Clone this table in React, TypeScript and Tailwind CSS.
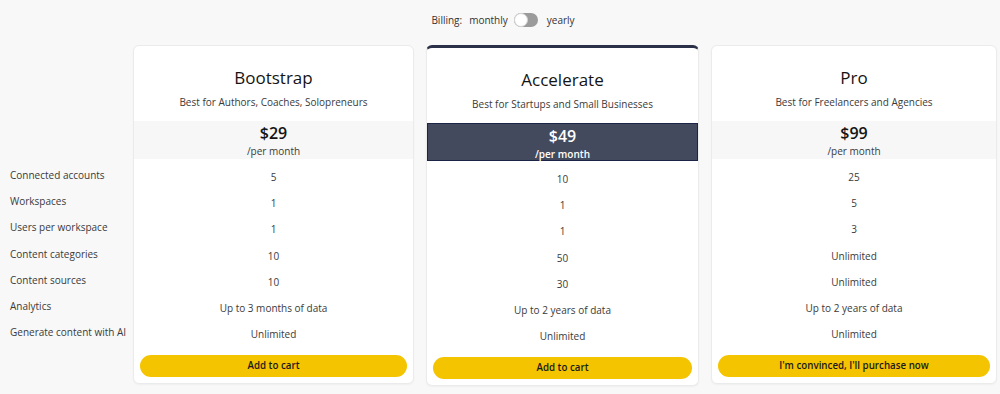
import React from "react";

type Plan = {
  name: string;
  tagline: string;
  price: string;
  values: string[];
  cta: string;
  featured?: boolean;
  width: string;
};

const features = [
  "Connected accounts",
  "Workspaces",
  "Users per workspace",
  "Content categories",
  "Content sources",
  "Analytics",
  "Generate content with AI",
];

const plans: Plan[] = [
  {
    name: "Bootstrap",
    tagline: "Best for Authors, Coaches, Solopreneurs",
    price: "$29",
    values: ["5", "1", "1", "10", "10", "Up to 3 months of data", "Unlimited"],
    cta: "Add to cart",
    width: "w-[281px]",
  },
  {
    name: "Accelerate",
    tagline: "Best for Startups and Small Businesses",
    price: "$49",
    values: ["10", "1", "1", "50", "30", "Up to 2 years of data", "Unlimited"],
    cta: "Add to cart",
    featured: true,
    width: "w-[273px]",
  },
  {
    name: "Pro",
    tagline: "Best for Freelancers and Agencies",
    price: "$99",
    values: ["25", "5", "3", "Unlimited", "Unlimited", "Up to 2 years of data", "Unlimited"],
    cta: "I'm convinced, I'll purchase now",
    width: "w-[286px]",
  },
];

const PlanCard: React.FC<{ plan: Plan }> = ({ plan }) => {
  return (
    <div
      className={`${plan.width} shrink-0 bg-white rounded-[6px] border border-[#ebebeb] shadow-[0_1px_2px_rgba(0,0,0,0.04)] overflow-hidden ${
        plan.featured ? "border-t-[3px] border-t-[#2b3149]" : ""
      }`}
    >
      <div className="pt-[20px] text-center">
        <div className="h-[24px] leading-[24px] text-[17px] text-[#141414]">{plan.name}</div>
        <div className="mt-[5px] h-[14px] leading-[14px] text-[10px] text-[#3a3a3a]">{plan.tagline}</div>
      </div>

      {/* price band */}
      <div
        className={`mt-[12px] h-[38px] text-center ${
          plan.featured ? "bg-[#434a5e] border border-[#1c2545] text-white" : "bg-[#f7f7f7] text-[#141414]"
        }`}
      >
        <div className="pt-[1px] h-[23px] leading-[22px] text-[16px] font-semibold">{plan.price}</div>
        <div
          className={`h-[14px] leading-[14px] text-[10px] ${
            plan.featured ? "font-semibold text-white" : "text-[#3a3a3a]"
          }`}
        >
          /per month
        </div>
      </div>

      {/* feature values */}
      <div className="mt-[5px] flex flex-col">
        {plan.values.map((v, i) => (
          <div key={i} className="h-[26.3px] flex items-center justify-center text-[10px] text-[#3a3a3a]">
            {v}
          </div>
        ))}
      </div>

      <div className="px-[6px] pt-[3px] pb-[6px]">
        <button className="w-full h-[22px] leading-[22px] rounded-full bg-[#f5c400] text-[9.75px] font-semibold text-[#1a1a1a]">
          {plan.cta}
        </button>
      </div>
    </div>
  );
};

export default function App() {
  return (
    <div
      className="w-[1000px] h-[394px] bg-[#f8f8f8] overflow-hidden"
      style={{ fontFamily: '"Open Sans", "Noto Sans", sans-serif' }}
    >
      {/* billing toggle */}
      <div className="h-[45px] flex items-start justify-center pt-[13px] pl-[6px] text-[10px] text-[#333]">
        <div className="flex items-center h-[14px]">
          <span>Billing:</span>
          <span className="ml-[7px]">monthly</span>
          <div className="ml-[6px] w-[24px] h-[14px] rounded-full bg-[#9b9b9b] relative">
            <div className="absolute left-0 top-0 w-[14px] h-[14px] rounded-full bg-white border border-[#d4d4d4]" />
          </div>
          <span className="ml-[9px]">yearly</span>
        </div>
      </div>

      <div className="flex items-start">
        {/* feature labels */}
        <div className="w-[133px] shrink-0 pl-[10px] pt-[117px] flex flex-col">
          {features.map((f) => (
            <div key={f} className="h-[26.3px] flex items-center text-[10px] text-[#3a3a3a] whitespace-nowrap">
              {f}
            </div>
          ))}
        </div>

        <div className="flex items-start gap-[12px]">
          {plans.map((p) => (
            <PlanCard key={p.name} plan={p} />
          ))}
        </div>
      </div>
    </div>
  );
}
